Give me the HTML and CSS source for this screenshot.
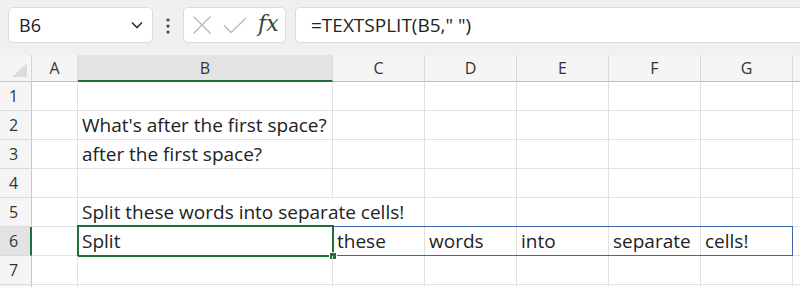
FILE: index.html
```html
<!DOCTYPE html>
<html>
<head>
<meta charset="utf-8">
<link rel="stylesheet" href="styles.css">
</head>
<body>
<div class="toolbar">
  <div class="namebox">
    <span class="ref">B6</span>
    <svg class="chev" width="14" height="10" viewBox="0 0 14 10"><path d="M2 2.5 L7 7.5 L12 2.5" fill="none" stroke="#333" stroke-width="1.6"/></svg>
  </div>
  <svg class="dots" width="6" height="20" viewBox="0 0 6 20"><circle cx="3" cy="4" r="1.6" fill="#444"/><circle cx="3" cy="10" r="1.6" fill="#444"/><circle cx="3" cy="16" r="1.6" fill="#444"/></svg>
  <div class="fxbox">
    <svg width="20" height="20" viewBox="0 0 20 20"><path d="M1.5 1.5 L18.5 18.5 M18.5 1.5 L1.5 18.5" stroke="#b8b8b8" stroke-width="1.3" fill="none"/></svg>
    <svg width="24" height="17" viewBox="0 0 24 17"><path d="M1 8.5 L8 15.5 L23 1" stroke="#b8b8b8" stroke-width="1.3" fill="none"/></svg>
    <span class="fx">fx</span>
  </div>
  <div class="formula">=TEXTSPLIT(B5," ")</div>
</div>
<div class="sheet">
  <div class="row hdr">
    <div class="corner"><svg width="18" height="16" viewBox="0 0 18 16"><path d="M17 1 L17 15 L2 15 Z" fill="#dcdcdc"/></svg></div>
    <div class="ch">A</div><div class="ch sel">B</div><div class="ch">C</div><div class="ch">D</div><div class="ch">E</div><div class="ch">F</div><div class="ch">G</div><div class="ch"></div>
  </div>
  <div class="row"><div class="rh">1</div><div class="c"></div><div class="c"></div><div class="c"></div><div class="c"></div><div class="c"></div><div class="c"></div><div class="c"></div><div class="c"></div></div>
  <div class="row"><div class="rh">2</div><div class="c"></div><div class="c">What's after the first space?</div><div class="c"></div><div class="c"></div><div class="c"></div><div class="c"></div><div class="c"></div><div class="c"></div></div>
  <div class="row"><div class="rh">3</div><div class="c"></div><div class="c">after the first space?</div><div class="c"></div><div class="c"></div><div class="c"></div><div class="c"></div><div class="c"></div><div class="c"></div></div>
  <div class="row"><div class="rh">4</div><div class="c"></div><div class="c"></div><div class="c"></div><div class="c"></div><div class="c"></div><div class="c"></div><div class="c"></div><div class="c"></div></div>
  <div class="row"><div class="rh">5</div><div class="c"></div><div class="c span2">Split these words into separate cells!</div><div class="c"></div><div class="c"></div><div class="c"></div><div class="c"></div><div class="c"></div></div>
  <div class="row r6"><div class="rh sel">6</div><div class="c"></div><div class="c">Split</div><div class="c">these</div><div class="c">words</div><div class="c">into</div><div class="c">separate</div><div class="c">cells!</div><div class="c"></div>
    <div class="spill"></div>
    <div class="active"><div class="handle"></div></div>
  </div>
  <div class="row"><div class="rh">7</div><div class="c"></div><div class="c"></div><div class="c"></div><div class="c"></div><div class="c"></div><div class="c"></div><div class="c"></div><div class="c"></div></div>
  <div class="row"><div class="rh"></div><div class="c"></div><div class="c"></div><div class="c"></div><div class="c"></div><div class="c"></div><div class="c"></div><div class="c"></div><div class="c"></div></div>
</div>
</body>
</html>
```
FILE: styles.css
```css
html, body {
  margin: 0;
  padding: 0;
  background: #ffffff;
  overflow: hidden;
  font-family: "Open Sans", "Noto Sans", sans-serif;
  color: #222;
}
.toolbar {
  height: 55px;
  box-sizing: border-box;
  background: #f0f0f0;
  display: flex;
  align-items: flex-start;
  padding: 7px 0 0 8px;
}
.namebox {
  width: 145px;
  height: 36px;
  box-sizing: border-box;
  background: #fff;
  border: 1px solid #dcdcdc;
  border-radius: 5px;
  display: flex;
  align-items: center;
  justify-content: space-between;
  padding: 0 8px 0 10px;
}
.ref { font-size: 18px; color: #222; }
.dots { margin: 9px 0 0 12px; }
.fxbox {
  margin-left: 12px;
  width: 103px;
  height: 36px;
  box-sizing: border-box;
  background: #fff;
  border: 1px solid #dcdcdc;
  border-radius: 5px;
  display: flex;
  align-items: center;
  padding: 0 5px 0 8px;
  gap: 11px;
}
.fx {
  font-family: "DejaVu Serif", "Liberation Serif", serif;
  font-style: italic;
  font-size: 22px;
  color: #2d4a36;
  line-height: 1;
  margin-top: -3px;
}
.formula {
  margin-left: 9px;
  flex: 1;
  height: 36px;
  box-sizing: border-box;
  background: #fff;
  border: 1px solid #dcdcdc;
  border-right: none;
  border-radius: 5px 0 0 5px;
  display: flex;
  align-items: center;
  padding-left: 15px;
  font-size: 19px;
  color: #222;
}
.sheet { display: flex; flex-direction: column; }
.row {
  position: relative;
  display: grid;
  grid-template-columns: 32px 46px 255px 92px 92px 92px 92px 92px 20px;
  height: 29px;
}
.row.hdr { height: 27px; background: #f5f5f5; }
.corner {
  border-right: 1px solid #d4d4d4;
  border-bottom: 1px solid #c8c8c8;
  display: flex;
  align-items: flex-end;
  justify-content: flex-end;
  padding: 0 3px 3px 0;
}
.ch {
  border-right: 1px solid #dadada;
  border-bottom: 1px solid #c0c0c0;
  display: flex;
  align-items: center;
  justify-content: center;
  font-size: 16px;
  color: #333;
}
.ch.sel {
  background: #e3e3e3;
  border-bottom: 2px solid #1e6e3e;
}
.rh {
  background: #f5f5f5;
  border-right: 1px solid #c8c8c8;
  border-bottom: 1px solid #dadada;
  display: flex;
  align-items: center;
  padding-left: 9px;
  font-size: 16px;
  color: #333;
}
.rh.sel {
  background: #e3e3e3;
  border-right: 2px solid #1e6e3e;
}
.c {
  border-right: 1px solid #e1e1e1;
  border-bottom: 1px solid #e1e1e1;
  padding: 0 0 0 4px;
  box-sizing: border-box;
  white-space: nowrap;
  font-size: 19px;
  line-height: 28px;
  color: #222;
}
.span2 { grid-column: span 2; }
.spill {
  position: absolute;
  left: 77px;
  top: -1px;
  width: 716px;
  height: 30px;
  box-sizing: border-box;
  border: 1px solid #3d67ad;
}
.active {
  position: absolute;
  left: 77px;
  top: -2px;
  width: 257px;
  height: 32px;
  box-sizing: border-box;
  border: 2px solid #1e6e3e;
}
.handle {
  position: absolute;
  right: -5px;
  bottom: -5px;
  width: 6px;
  height: 6px;
  background: #1e6e3e;
  border: 1px solid #fff;
}
```
